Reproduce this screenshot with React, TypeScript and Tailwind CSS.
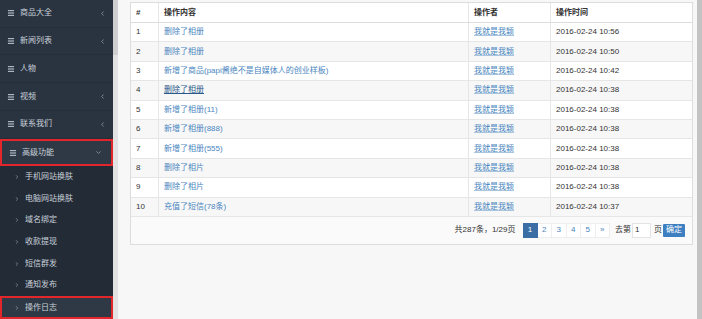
import { ChevronLeft, ChevronDown, ChevronRight, Menu } from 'lucide-react'

const FONT = { fontFamily: '"Liberation Sans", "Noto Sans CJK SC", sans-serif' }

const topMenu = [
  { name: '商品大全', arrow: true },
  { name: '新闻列表', arrow: true },
  { name: '人物', arrow: false },
  { name: '视频', arrow: true },
  { name: '联系我们', arrow: true },
]

const subMenu = ['手机网站换肤', '电脑网站换肤', '域名绑定', '收款提现', '短信群发', '通知发布']

const logs = [
  { id: 1, content: '删除了相册', time: '2016-02-24 10:56' },
  { id: 2, content: '删除了相册', time: '2016-02-24 10:50' },
  { id: 3, content: '新增了商品(papi酱绝不是自媒体人的创业样板)', time: '2016-02-24 10:42' },
  { id: 4, content: '删除了相册', time: '2016-02-24 10:38' },
  { id: 5, content: '新增了相册(11)', time: '2016-02-24 10:38' },
  { id: 6, content: '新增了相册(888)', time: '2016-02-24 10:38' },
  { id: 7, content: '新增了相册(555)', time: '2016-02-24 10:38' },
  { id: 8, content: '删除了相片', time: '2016-02-24 10:38' },
  { id: 9, content: '删除了相片', time: '2016-02-24 10:38' },
  { id: 10, content: '充值了短信(78条)', time: '2016-02-24 10:37' },
]

function Sidebar() {
  return (
    <aside className="w-[113px] shrink-0 bg-[#2a3440] text-[#c9d1da] text-[8px] flex flex-col">
      {topMenu.map(item => (
        <div key={item.name} className="h-[28px] flex items-center pl-[7px] pr-[7px] border-b border-[#242d38]">
          <Menu className="w-[8px] h-[8px]" strokeWidth={3} />
          <span className="ml-[5px] flex-1">{item.name}</span>
          {item.arrow && <ChevronLeft className="w-[7px] h-[7px] text-[#9aa4ae]" strokeWidth={2.5} />}
        </div>
      ))}
      {/* 展开的菜单 */}
      <div className="h-[28px] flex items-center pl-[7px] pr-[9px] bg-[#2e3945] border-2 border-[#e3262b]">
        <Menu className="w-[8px] h-[8px]" strokeWidth={3} />
        <span className="ml-[5px] flex-1">高级功能</span>
        <ChevronDown className="w-[7px] h-[7px] text-[#9aa4ae]" strokeWidth={2.5} />
      </div>
      <div className="flex-1 bg-[#232b36] flex flex-col">
        {subMenu.map(name => (
          <div key={name} className="h-[21.6px] flex items-center pl-[14px]">
            <ChevronRight className="w-[6px] h-[6px] text-[#9aa4ae]" strokeWidth={2.5} />
            <span className="ml-[5px]">{name}</span>
          </div>
        ))}
        <div className="h-[23px] flex items-center pl-[12px] bg-[#2e3945] border-2 border-[#e3262b]">
          <ChevronRight className="w-[6px] h-[6px] text-[#9aa4ae]" strokeWidth={2.5} />
          <span className="ml-[5px]">操作日志</span>
        </div>
      </div>
    </aside>
  )
}

function LogTable() {
  return (
    <div className="border border-[#dddddd] bg-white text-[8px]">
      <div className="flex h-[20px] items-center font-bold text-[#333] border-b border-[#dddddd]">
        <div className="w-[27px] pl-[5px]">#</div>
        <div className="w-[310px] pl-[5px] border-l border-[#e6e6e6] h-full flex items-center">操作内容</div>
        <div className="w-[82px] pl-[5px] border-l border-[#e6e6e6] h-full flex items-center">操作者</div>
        <div className="flex-1 pl-[5px] border-l border-[#e6e6e6] h-full flex items-center">操作时间</div>
      </div>
      {logs.map(log => (
        <div
          key={log.id}
          className={`flex h-[19.4px] items-center border-b border-[#e6e6e6] ${log.id % 2 === 0 ? 'bg-[#f7f7f7]' : 'bg-white'}`}
        >
          <div className="w-[27px] pl-[5px] text-[#333]">{log.id}</div>
          <div className="w-[310px] pl-[5px] border-l border-[#e6e6e6] h-full flex items-center">
            <a className={log.id === 4 ? 'text-[#2a5a8a] underline' : 'text-[#4a86c0]'}>{log.content}</a>
          </div>
          <div className="w-[82px] pl-[5px] border-l border-[#e6e6e6] h-full flex items-center">
            <a className="text-[#4a86c0] underline decoration-[#a9c4de]">我就是我颖</a>
          </div>
          <div className="flex-1 pl-[5px] border-l border-[#e6e6e6] h-full flex items-center text-[#333]">
            {log.time}
          </div>
        </div>
      ))}
      {/* 分页 */}
      <div className="h-[27px] flex items-center justify-end pr-[7px] bg-[#fafafa] text-[8px] text-[#333]">
        <span className="mr-[7px]">共287条，1/29页</span>
        <div className="flex">
          <span className="w-[15px] h-[15px] flex items-center justify-center bg-[#3b6ea5] text-white border border-[#3b6ea5]">1</span>
          {['2', '3', '4', '5', '»'].map(p => (
            <span key={p} className="w-[14.5px] h-[15px] flex items-center justify-center text-[#4a86c0] bg-white border border-[#eeeeee] border-l-0">
              {p}
            </span>
          ))}
        </div>
        <span className="ml-[5px]">去第</span>
        <span className="ml-[1px] w-[19px] h-[15px] border border-[#e4e4e4] bg-white flex items-center pl-[2px] text-[8px]">1</span>
        <span className="ml-[3px]">页</span>
        <span className="ml-[1px] px-[3px] h-[13px] flex items-center bg-[#3d7fc1] text-white rounded-[1px]">确定</span>
      </div>
    </div>
  )
}

export default function App() {
  return (
    <div className="w-[702px] h-[319px] overflow-hidden flex bg-[#f5f5f5]" style={FONT}>
      <Sidebar />
      {/* 侧栏滚动条 */}
      <div className="w-[5px] shrink-0 bg-[#e2e2e2] flex flex-col">
        <div className="h-[55px] bg-[#cfcfcf]" />
      </div>
      <main className="flex-1 pl-[12px] pt-[2px] pr-[4px] bg-[#f7f7f7]">
        <LogTable />
      </main>
      <div className="w-[5px] shrink-0 bg-[#c3c3c3]" />
    </div>
  )
}
